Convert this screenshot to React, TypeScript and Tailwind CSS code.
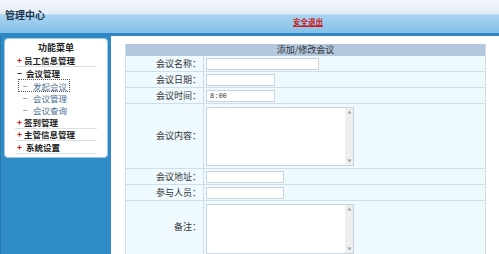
import React from "react";

const font = { fontFamily: '"Noto Sans CJK SC", "Noto Sans", sans-serif' };

function Input({ w, value }: { w: number; value?: string }) {
  return (
    <div
      className="h-[12px] bg-white border border-[#c9d3dc] text-[7px] leading-[10px] pl-[3px] text-[#333]"
      style={{ width: w, fontFamily: '"Liberation Mono", monospace' }}
    >
      {value}
    </div>
  );
}

function Arrow({ up }: { up?: boolean }) {
  return (
    <svg width="5" height="4" viewBox="0 0 5 4">
      <polygon points={up ? "2.5,0.5 4.5,3.5 0.5,3.5" : "0.5,0.5 4.5,0.5 2.5,3.5"} fill="#a0a0a0" />
    </svg>
  );
}

function TextArea({ h }: { h: number }) {
  return (
    <div
      className="w-[148px] shrink-0 bg-white border border-[#c9d3dc] flex justify-end"
      style={{ height: h }}
    >
      <div className="w-[8px] h-full bg-[#efefef] flex flex-col justify-between items-center py-[2px]">
        <Arrow up />
        <Arrow />
      </div>
    </div>
  );
}

function Row({
  label,
  h,
  children,
}: {
  label: string;
  h: number;
  children?: React.ReactNode;
}) {
  return (
    <div className="flex shrink-0 border-b border-[#cfdee8]" style={{ height: h }}>
      <div className="w-[78px] flex items-center justify-end pr-[2px] border-r border-[#cfdee8] text-[9px] text-[#333]">
        {label}
      </div>
      <div className="flex-1 flex items-center pl-[2px]">{children}</div>
    </div>
  );
}

function MainItem({ sign, label, line = true }: { sign: string; label: string; line?: boolean }) {
  return (
    <div
      className={`h-[12.4px] mx-[10px] flex items-center text-[8.5px] font-bold text-[#222] ${
        line ? "border-b border-[#d8e0e8]" : ""
      }`}
    >
      <span className={`w-[9px] text-center ${sign === "+" ? "text-[#c02020]" : "text-[#333]"}`}>
        {sign}
      </span>
      <span className="whitespace-pre">{label}</span>
    </div>
  );
}

function SubItem({ label, focus }: { label: string; focus?: boolean }) {
  return (
    <div className="h-[12.3px] pl-[14px] flex items-center text-[8.5px] text-[#4a6f96]">
      <span
        className={`flex items-center h-[11px] pr-[2px] ${
          focus ? "outline outline-1 outline-dotted outline-[#555]" : ""
        }`}
      >
        <span className="w-[12px] text-center">−</span>
        <span className="ml-[2px]">{label}</span>
      </span>
    </div>
  );
}

export default function App() {
  return (
    <div className="w-[499px] h-[254px] overflow-hidden flex flex-col bg-white" style={font}>
      {/* header */}
      <div className="h-[33px] shrink-0 relative bg-[linear-gradient(to_bottom,#f4f7fb_0%,#e3edf7_42%,#a9d4f0_45%,#84c0e8_100%)]">
        <div className="absolute left-[5px] top-[7px] text-[10px] font-bold text-[#1e3550]">管理中心</div>
        <div className="absolute left-[293px] top-[16px] text-[7.5px] font-bold text-[#d01818] underline">
          安全退出
        </div>
      </div>
      <div className="h-[3px] shrink-0 bg-[#2f86c4]" />
      <div className="flex-1 min-h-0 overflow-hidden flex">
        {/* sidebar */}
        <div className="w-[111px] shrink-0 bg-[#2e8bc6] border-l border-[#2a78ae] pt-[2px] pl-[3px] pr-[3px]">
          <div className="h-[120px] bg-white rounded-[4px] border border-[#9fc6e2] pt-[1px]">
            <div className="h-[15px] flex items-center justify-center text-[9px] font-bold text-[#222]">
              功能菜单
            </div>
            <MainItem sign="+" label="员工信息管理" />
            <MainItem sign="−" label=" 会议管理" line={false} />
            <SubItem label="发起会议" focus />
            <SubItem label="会议管理" />
            <SubItem label="会议查询" />
            <MainItem sign="+" label="签到管理" />
            <MainItem sign="+" label="主管信息管理" />
            <MainItem sign="+" label=" 系统设置" />
          </div>
        </div>
        {/* main */}
        <div className="flex-1 pl-[14px] pt-[8px]">
          <div className="w-[361px] bg-[#effaff] border-l border-r border-[#cfdee8]">
            <div className="h-[12px] bg-[#b3c8df] flex items-center justify-center text-[9px] text-[#333]">
              添加/修改会议
            </div>
            <Row label="会议名称：" h={16}>
              <Input w={113} />
            </Row>
            <Row label="会议日期：" h={16}>
              <Input w={69} />
            </Row>
            <Row label="会议时间：" h={16}>
              <Input w={69} value="8:00" />
            </Row>
            <Row label="会议内容：" h={65}>
              <TextArea h={59} />
            </Row>
            <Row label="会议地址：" h={16}>
              <Input w={78} />
            </Row>
            <Row label="参与人员：" h={16}>
              <Input w={78} />
            </Row>
            <div className="flex h-[60px]">
              <div className="w-[78px] flex items-center justify-end pr-[2px] border-r border-[#cfdee8] text-[9px] text-[#333] pb-[8px]">
                备注：
              </div>
              <div className="flex-1 pl-[2px] pt-[3px]">
                <TextArea h={50} />
              </div>
            </div>
          </div>
        </div>
      </div>
    </div>
  );
}
